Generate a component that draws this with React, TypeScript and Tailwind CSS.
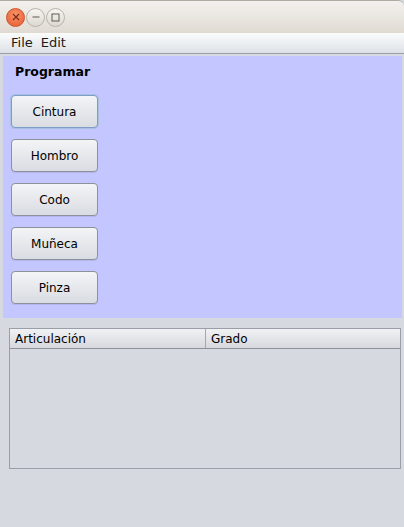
import React from "react";

const buttons = ["Cintura", "Hombro", "Codo", "Muñeca", "Pinza"];

function TitleButton({ kind }: { kind: "close" | "min" | "max" }) {
  if (kind === "close") {
    return (
      <div className="flex h-[19px] w-[19px] items-center justify-center rounded-full border border-[#c9542c] bg-[radial-gradient(circle_at_50%_35%,#f9946a,#e8582c)]">
        <svg width="8" height="8" viewBox="0 0 8 8">
          <path d="M1 1 L7 7 M7 1 L1 7" stroke="#7a2a12" strokeWidth="1.2" />
        </svg>
      </div>
    );
  }
  return (
    <div className="flex h-[19px] w-[19px] items-center justify-center rounded-full border border-[#b8b3ab] bg-[linear-gradient(#f7f5f2,#ddd8d0)]">
      {kind === "min" ? (
        <svg width="8" height="8" viewBox="0 0 8 8">
          <path d="M0.5 4 H7.5" stroke="#5e5a55" strokeWidth="1" />
        </svg>
      ) : (
        <svg width="9" height="9" viewBox="0 0 9 9">
          <rect x="1" y="1" width="7" height="7" fill="none" stroke="#5e5a55" strokeWidth="1" />
        </svg>
      )}
    </div>
  );
}

export default function App() {
  return (
    <div
      className="flex h-[527px] w-[404px] flex-col overflow-hidden bg-[#d6d9e0] text-[12px] text-black"
      style={{ fontFamily: '"DejaVu Sans", sans-serif' }}
    >
      {/* title bar */}
      <div className="flex h-[33px] shrink-0 items-center gap-[1px] rounded-tr-[6px] border-t border-[#b0aaa2] bg-[linear-gradient(#f3f1ee,#e0dad2)] pl-[6px]">
        <TitleButton kind="close" />
        <TitleButton kind="min" />
        <TitleButton kind="max" />
      </div>

      {/* menu bar */}
      <div className="flex h-[21px] shrink-0 items-center gap-[8px] border-b border-[#9aa0a8] bg-[linear-gradient(#fbfcfc,#dde1e6)] pl-[11px] text-[13px] text-[#1a1a1a]">
        <span>File</span>
        <span>Edit</span>
      </div>

      {/* programming panel */}
      <div className="ml-[3px] mr-[2px] mt-[2px] flex h-[262px] shrink-0 flex-col bg-[#c3c6ff] pl-[8px]">
        <div className="pl-[4px] pt-[8px] text-[12.5px] font-bold leading-[16px]">Programar</div>
        <div className="mt-[15px] flex flex-col gap-[11px]">
          {buttons.map((b, i) => (
            <button
              key={b}
              type="button"
              className={`flex h-[33px] w-[87px] items-center justify-center rounded-[4px] border bg-[linear-gradient(#f3f4f6,#d9dce2)] text-[12px] shadow-[0_1px_0_rgba(0,0,0,0.08)] ${
                i === 0 ? "border-[#7d9cc6] ring-1 ring-[#a9c1e0]" : "border-[#8c919b]"
              }`}
            >
              {b}
            </button>
          ))}
        </div>
      </div>

      {/* table */}
      <div className="ml-[9px] mr-[3px] mt-[10px] flex h-[141px] flex-col border border-[#9a9ea6]">
        <div className="flex h-[20px] shrink-0 border-b border-[#8d9199] bg-[linear-gradient(#f1f2f4,#d6d8dd)]">
          <div className="flex w-[196px] items-center border-r border-[#a4a8af] pl-[5px]">Articulación</div>
          <div className="flex flex-1 items-center pl-[5px]">Grado</div>
        </div>
        <div className="flex-1 bg-[#d6d9e0]" />
      </div>
    </div>
  );
}
